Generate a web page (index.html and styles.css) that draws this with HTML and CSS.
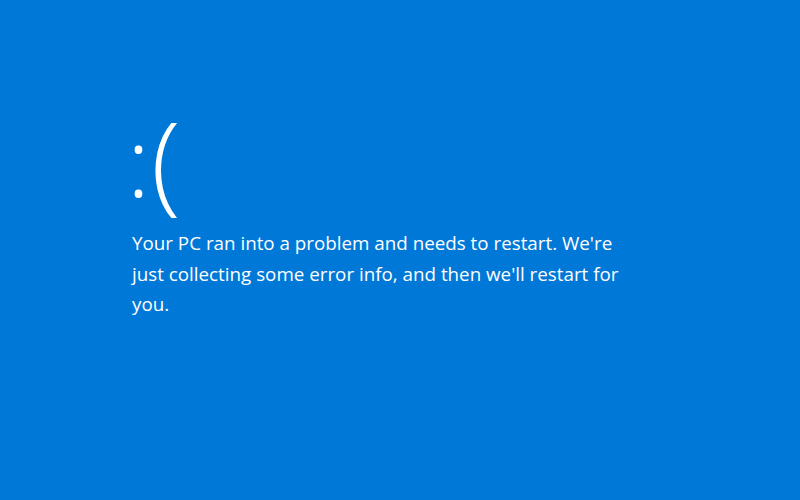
FILE: index.html
```html
<!DOCTYPE html>
<html lang="en">
<head>
<meta charset="utf-8">
<link rel="stylesheet" href="styles.css">
</head>
<body>
<main class="screen">
  <div class="face"><span class="colon">:</span><span class="paren">(</span></div>
  <p class="message">Your PC ran into a problem and needs to restart. We're just collecting some error info, and then we'll restart for you.</p>
</main>
</body>
</html>
```
FILE: styles.css
```css
html, body {
  margin: 0;
  padding: 0;
  width: 800px;
  height: 500px;
  overflow: hidden;
  background: #0078d7;
}
.screen {
  width: 800px;
  height: 500px;
  box-sizing: border-box;
  padding: 108px 0 0 132px;
  color: #ffffff;
  font-family: "Open Sans", "Noto Sans", sans-serif;
}
.face {
  display: flex;
  align-items: flex-start;
  height: 120px;
  font-weight: 300;
}
.colon {
  font-size: 96px;
  line-height: 104px;
  margin-left: -5px;
}
.paren {
  font-size: 109px;
  line-height: 102px;
  margin-left: 1px;
}
.message {
  margin: 0;
  width: 510px;
  font-size: 18.8px;
  line-height: 30.5px;
  font-weight: 400;
}
```
